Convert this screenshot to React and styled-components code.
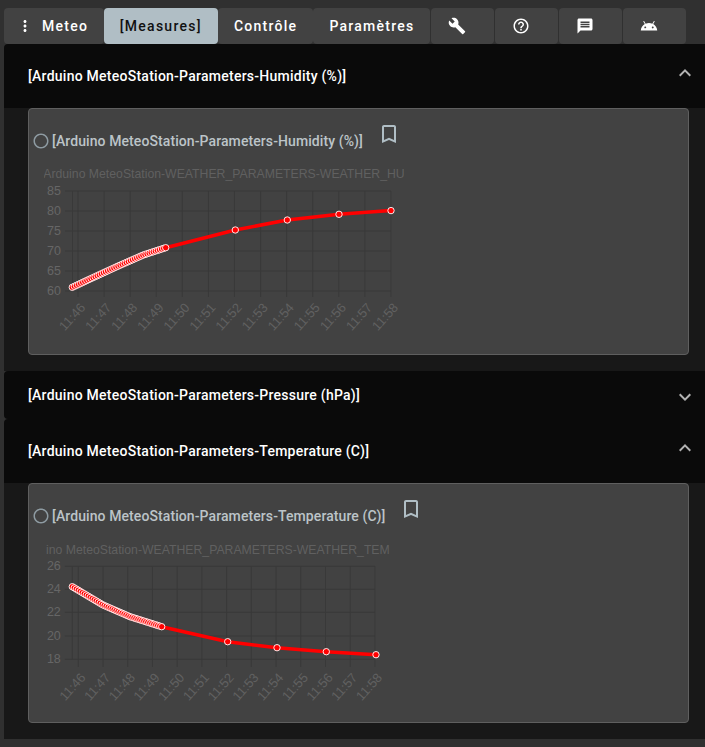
import React from 'react';
import styled, { createGlobalStyle } from 'styled-components';
import {
  MdMoreVert,
  MdBuild,
  MdHelpOutline,
  MdMessage,
  MdExpandLess,
  MdExpandMore,
  MdBookmarkBorder,
  MdRadioButtonUnchecked,
} from 'react-icons/md';

const TIMES = ['11:46', '11:47', '11:48', '11:49', '11:50', '11:51', '11:52', '11:53', '11:54', '11:55', '11:56', '11:57', '11:58'];

const interpolate = (knots, count) => {
  const pts = [];
  const x0 = knots[0][0];
  const x1 = knots[knots.length - 1][0];
  for (let i = 0; i < count; i++) {
    const x = x0 + ((x1 - x0) * i) / (count - 1);
    let k = 0;
    while (k < knots.length - 2 && x > knots[k + 1][0]) k++;
    const t = (x - knots[k][0]) / (knots[k + 1][0] - knots[k][0]);
    pts.push([x, knots[k][1] + (knots[k + 1][1] - knots[k][1]) * t]);
  }
  return pts;
};

const humidity = {
  left: 15,
  width: 360,
  height: 189,
  title: '[Arduino MeteoStation-WEATHER_PARAMETERS-WEATHER_HUMIDITY]',
  titleX: -4.2,
  titleY: 13,
  axisX: 28.5,
  gridX: 34,
  gridStep: 26.08,
  gridBottom: 132,
  gridTop: 26,
  yTicks: [['85', 26], ['80', 46], ['75', 66], ['70', 86], ['65', 106], ['60', 126]],
  dense: [[28.3, 122.3], [46, 114], [72.7, 101.7], [99.3, 90], [121.7, 82.7]],
  sparse: [[191.3, 65], [243.3, 55], [295, 49.3], [347, 45.6]],
};

const temperature = {
  left: 17,
  width: 344,
  height: 182,
  title: '[Arduino MeteoStation-WEATHER_PARAMETERS-WEATHER_TEMPERATURE]',
  titleX: -29.3,
  titleY: 14,
  axisX: 26.3,
  gridX: 32.3,
  gridStep: 24.72,
  gridBottom: 127,
  gridTop: 26.3,
  yTicks: [['26', 26.3], ['24', 49.3], ['22', 72.3], ['20', 96], ['18', 119.3]],
  dense: [[26.3, 46.7], [57, 65], [84, 76.7], [115.7, 86.7]],
  sparse: [[181.7, 101.7], [231, 107.7], [280.3, 111.7], [330, 114.7]],
};

const AndroidIcon = () => (
  <svg width="18" height="18" viewBox="0 0 24 24" fill="currentColor">
    <path d="M17.6 9.48l1.84-3.18c.16-.31.04-.69-.26-.85-.29-.15-.65-.06-.83.22l-1.88 3.24c-2.86-1.21-6.08-1.21-8.94 0L5.65 5.67c-.19-.29-.58-.38-.87-.2-.28.18-.37.54-.22.83L6.4 9.48C3.3 11.25 1.34 14.33 1 18h22c-.34-3.66-2.3-6.75-5.4-8.52zM7 15.25c-.69 0-1.25-.56-1.25-1.25s.56-1.25 1.25-1.25 1.25.56 1.25 1.25-.56 1.25-1.25 1.25zm10 0c-.69 0-1.25-.56-1.25-1.25s.56-1.25 1.25-1.25 1.25.56 1.25 1.25-.56 1.25-1.25 1.25z" />
  </svg>
);

const LineChart = ({ config }) => {
  const { width, height, gridX, gridStep, gridTop, gridBottom, axisX, yTicks } = config;
  const dots = [...interpolate(config.dense, 46), ...config.sparse];
  const right = gridX + gridStep * 12;
  return (
    <ChartSvg $left={config.left} width={width} height={height} viewBox={`0 0 ${width} ${height}`}>
      <ChartTitle x={config.titleX} y={config.titleY}>{config.title}</ChartTitle>
      {yTicks.map(([label, y]) => (
        <g key={label}>
          <GridLine x1={axisX - 7.5} x2={right} y1={y} y2={y} />
          <YLabel x={axisX - 11.5} y={y + 4} textAnchor="end">{label}</YLabel>
        </g>
      ))}
      <GridLine x1={axisX} x2={axisX} y1={gridTop} y2={yTicks[yTicks.length - 1][1]} />
      {TIMES.map((time, i) => {
        const x = gridX + gridStep * i;
        return (
          <g key={time}>
            <GridLine x1={x} x2={x} y1={gridTop} y2={gridBottom} />
            <XLabel
              x={x + 8}
              y={gridBottom + 11}
              textAnchor="end"
              transform={`rotate(-48 ${x + 8} ${gridBottom + 11})`}
            >
              {time}
            </XLabel>
          </g>
        );
      })}
      <polyline
        points={dots.map((p) => p.join(',')).join(' ')}
        fill="none"
        stroke="#ff0000"
        strokeWidth="3.5"
      />
      {dots.map(([x, y], i) => (
        <circle key={i} cx={x} cy={y} r="3.2" fill="#ff0000" stroke="#fff" strokeWidth="0.9" />
      ))}
    </ChartSvg>
  );
};

const Section = ({ title, config }) => (
  <Accordion>
    <AccordionHeader $open={!!config}>
      <span>{title}</span>
      <Chevron $open={!!config}>{config ? <MdExpandLess size={24} /> : <MdExpandMore size={24} />}</Chevron>
    </AccordionHeader>
    {config && (
      <AccordionBody>
        <Panel>
          <PanelHead>
            <RadioIcon><MdRadioButtonUnchecked size={18} /></RadioIcon>
            <PanelTitle>{title}</PanelTitle>
            <BookmarkIcon><MdBookmarkBorder size={24} /></BookmarkIcon>
          </PanelHead>
          <LineChart config={config} />
        </Panel>
      </AccordionBody>
    )}
  </Accordion>
);

export default function App() {
  return (
    <Page>
      <GlobalStyle />
      <TabBar>
        <Tab $menu>
          <MdMoreVert size={18} />
          Meteo
        </Tab>
        <Tab $active>[Measures]</Tab>
        <Tab>Contrôle</Tab>
        <Tab>Paramètres</Tab>
        <IconTab><MdBuild size={18} /></IconTab>
        <IconTab><MdHelpOutline size={18} /></IconTab>
        <IconTab><MdMessage size={18} /></IconTab>
        <IconTab><AndroidIcon /></IconTab>
      </TabBar>
      <Section title="[Arduino MeteoStation-Parameters-Humidity (%)]" config={humidity} />
      <Section title="[Arduino MeteoStation-Parameters-Pressure (hPa)]" />
      <Section title="[Arduino MeteoStation-Parameters-Temperature (C)]" config={temperature} />
    </Page>
  );
}

const GlobalStyle = createGlobalStyle`
  html, body {
    margin: 0;
    background: #303030;
  }
  body {
    font-family: Roboto, "Liberation Sans", sans-serif;
    overflow: hidden;
  }
`;

const Page = styled.div`
  padding: 8px 0 8px 4px;
`;

const TabBar = styled.div`
  display: flex;
  gap: 0.2px;
  height: 36px;
`;

const Tab = styled.button`
  display: flex;
  align-items: center;
  gap: 8px;
  height: 36px;
  padding: ${(p) => (p.$menu ? '0 15.5px 0 12px' : '0 16px')};
  border: none;
  border-radius: 4px;
  background: ${(p) => (p.$active ? '#b0bec5' : '#424242')};
  color: ${(p) => (p.$active ? '#111' : '#fff')};
  font-family: Roboto, sans-serif;
  font-size: 14px;
  font-weight: 500;
  letter-spacing: 1.25px;
  white-space: nowrap;
`;

const IconTab = styled(Tab)`
  width: 63.8px;
  padding: 0 0 0 17px;
`;

const Accordion = styled.section`
  display: flex;
  flex-direction: column;
`;

const AccordionHeader = styled.div`
  display: flex;
  align-items: center;
  justify-content: space-between;
  height: ${(p) => (p.$open ? '64px' : '48px')};
  padding: 0 8px 0 24px;
  border-radius: 4px 0 0 ${(p) => (p.$open ? '0' : '4px')};
  background: #0a0a0a;
  color: #fff;
  font-size: 14px;
  font-weight: 500;
  letter-spacing: 0.25px;
`;

const Chevron = styled.span`
  display: flex;
  color: #b3b3b3;
  margin: ${(p) => (p.$open ? '0 0 6px' : '4px 0 0')};
`;

const AccordionBody = styled.div`
  padding: 0 16px 16px 24px;
  background: #181818;
`;

const Panel = styled.div`
  border: 1px solid #5f5f5f;
  border-radius: 4px;
  background: #424242;
`;

const PanelHead = styled.div`
  display: flex;
  align-items: center;
  height: 56px;
  padding-left: 3px;
  color: #b0bec5;
`;

const RadioIcon = styled.span`
  display: flex;
  margin: 8px 2px 0 0;
  color: #8e9ba2;
`;

const PanelTitle = styled.span`
  margin-top: 8px;
  font-size: 14px;
  font-weight: 500;
  letter-spacing: 0.09px;
  color: #bcc4c8;
`;

const BookmarkIcon = styled.span`
  display: flex;
  margin: 0 0 6px 14px;
`;

const ChartSvg = styled.svg`
  display: block;
  margin-left: ${(p) => p.$left}px;
  overflow: hidden;
`;

const ChartTitle = styled.text`
  font-family: "Liberation Sans", Arial, sans-serif;
  font-size: 12.25px;
  fill: #606060;
`;

const YLabel = styled.text`
  font-family: "Liberation Sans", Arial, sans-serif;
  font-size: 12.5px;
  fill: #666;
`;

const XLabel = styled(YLabel)`
  font-size: 13px;
  fill: #606060;
`;

const GridLine = styled.line`
  stroke: #393939;
  stroke-width: 1;
`;
